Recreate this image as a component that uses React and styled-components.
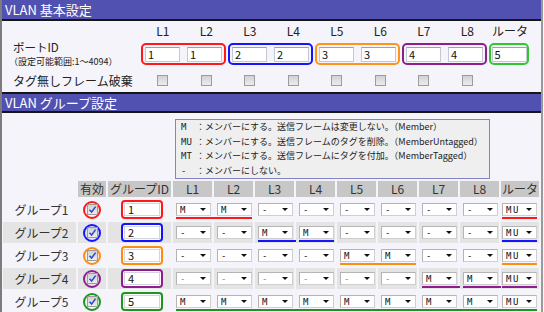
import React from "react";
import styled, { createGlobalStyle } from "styled-components";

const FONT = `"Noto Sans CJK JP", "Noto Sans", sans-serif`;

const Global = createGlobalStyle`
  html, body { margin: 0; padding: 0; background: #f4f4fa; }
  body { font-family: ${FONT}; color: #222; }
  * { box-sizing: border-box; }
`;

const Frame = styled.div`
  width: 543px;
  height: 312px;
  overflow: hidden;
  border-left: 2px solid #7c7c7c;
  border-right: 2px solid #9a9a9a;
  background: #f4f4fa;
`;

const SectionBar = styled.div`
  height: 21px;
  background: #5151b1;
  border-top: ${(p) => (p.$first ? 0 : 2)}px solid #161616;
  border-bottom: 2px solid #161616;
  color: #fff;
  font-size: 13px;
  line-height: ${(p) => (p.$first ? 19 : 17)}px;
  padding-left: 3px;
  white-space: nowrap;
`;

/* ---------- section 1 ---------- */
const BasicGrid = styled.div`
  display: grid;
  grid-template-columns: 139px repeat(8, 43.5px) 42px;
  grid-template-rows: 14px 30px 20px;
  row-gap: 1px;
  padding: 3px 0 2px;
  align-items: center;
`;

const ColLabel = styled.div`
  font-size: 12px;
  line-height: 14px;
  text-align: center;
  color: #222;
`;

const RowLabel = styled.div`
  grid-column: 1;
  padding-left: 11px;
  font-size: 12px;
  line-height: 15px;
  color: #222;
  white-space: nowrap;
`;

const PortTitle = styled.div`
  font-size: 11.5px;
  line-height: 16px;
`;

const SubNote = styled.div`
  font-size: 9px;
  line-height: 14px;
  margin-left: -4px;
`;

const PortBox = styled.div`
  grid-column: span ${(p) => p.$span};
  margin-right: 2px;
  height: 22px;
  border: 2px solid ${(p) => p.$color};
  border-radius: 5px;
  display: flex;
  align-items: center;
  justify-content: ${(p) => (p.$span === 1 ? "center" : "flex-start")};
  gap: 7px;
  padding: 0 ${(p) => (p.$span === 1 ? 0 : 2)}px;
`;

const TextInput = styled.div`
  width: ${(p) => p.$w}px;
  height: 15px;
  background: #fff;
  border: 1px solid #c2c8d4;
  border-top-color: #9aa2b0;
  font-size: 11px;
  line-height: 13px;
  padding-left: 2px;
  color: #111;
`;

const CheckCell = styled.div`
  display: flex;
  justify-content: center;
  align-items: center;
`;

const Box = styled.span`
  width: 11px;
  height: 11px;
  border: 1px solid #9c9c9c;
  background: linear-gradient(#d2d2d2, #ececec);
  display: inline-flex;
  align-items: center;
  justify-content: center;
`;

/* ---------- section 2 ---------- */
const Legend = styled.div`
  margin: 6px 0 0 173px;
  width: 315px;
  border: 1px solid #8484c4;
  background: #efeff0;
  padding: 0 5px;
  font-size: 9px;
  line-height: 14.5px;
  color: #222;
`;

const LegendLine = styled.div`
  display: flex;
  white-space: nowrap;
`;

const Code = styled.span`
  width: 15px;
  font-family: "DejaVu Sans Mono", monospace;
  font-size: 9px;
`;

const Table = styled.div`
  display: grid;
  grid-template-columns: 73px 28px 63px repeat(8, 39px) 38px;
  grid-template-rows: 16px repeat(5, 21px);
  column-gap: 2px;
  row-gap: 2px;
  margin: 2px 0 0 1px;
`;

const HeadCell = styled.div`
  background: ${(p) => (p.$blank ? "transparent" : "#c7c7c7")};
  font-size: 12px;
  line-height: 16px;
  text-align: center;
  color: #333;
  white-space: nowrap;
`;

const Cell = styled.div`
  background: ${(p) => (p.$alt ? "#e4e4e4" : "transparent")};
  display: flex;
  align-items: center;
  justify-content: ${(p) => p.$justify || "center"};
  padding-left: ${(p) => p.$pl || 0}px;
`;

const GroupName = styled(Cell)`
  font-size: 12px;
  color: #333;
  padding-left: 4px;
  white-space: nowrap;
`;

const Ring = styled.span`
  width: 18px;
  height: 18px;
  border: 2px solid ${(p) => p.$color};
  border-radius: 50%;
  display: flex;
  align-items: center;
  justify-content: center;
`;

const IdBox = styled.div`
  width: 42px;
  height: 19px;
  border: 2px solid ${(p) => p.$color};
  border-radius: 4px;
  background: #fff;
  padding: 1px;
`;

const IdInput = styled.div`
  height: 13px;
  border: 1px solid #d4d4dc;
  font-size: 11px;
  line-height: 11px;
  padding-left: 3px;
  color: #111;
`;

const SelectCell = styled.div`
  background: ${(p) => (p.$alt ? "#e4e4e4" : "transparent")};
  padding: 4px 0 0 ${(p) => p.$pl}px;
  display: flex;
  flex-direction: column;
  gap: 1px;
`;

const Select = styled.div`
  width: 35px;
  height: 13px;
  background: #fff;
  border: 1px solid #cfcfcf;
  border-top-color: #b4b4b4;
  border-left-color: #b4b4b4;
  display: flex;
  align-items: center;
  justify-content: space-between;
  padding: 0 4px 0 3px;
  font-family: "DejaVu Sans Mono", monospace;
  font-size: 9px;
  letter-spacing: ${(p) => (p.$wide ? 1.5 : 0)}px;
  color: ${(p) => (p.$dim ? "#888" : "#111")};
`;

const Arrow = styled.span`
  width: 0;
  height: 0;
  border-left: 3px solid transparent;
  border-right: 3px solid transparent;
  border-top: 3px solid #111;
`;

const Underline = styled.div`
  height: 2px;
  width: ${(p) => 35 + p.$extend}px;
  background: ${(p) => p.$color};
`;

const Check = () => (
  <svg width="9" height="9" viewBox="0 0 9 9">
    <path d="M1.5 4.8 L3.6 7 L7.6 1.6" fill="none" stroke="#2b48c8" strokeWidth="1.5" />
  </svg>
);

const portBoxes = [
  { color: "#ff1818", vals: ["1", "1"] },
  { color: "#1414ff", vals: ["2", "2"] },
  { color: "#ff9419", vals: ["3", "3"] },
  { color: "#8e1e8e", vals: ["4", "4"] },
  { color: "#2ec82e", vals: ["5"] },
];

const cols = ["L1", "L2", "L3", "L4", "L5", "L6", "L7", "L8"];

const groups = [
  { name: "グループ1", color: "#ff1818", id: "1", ports: ["M", "M", "-", "-", "-", "-", "-", "-"] },
  { name: "グループ2", color: "#1414ff", id: "2", ports: ["-", "-", "M", "M", "-", "-", "-", "-"] },
  { name: "グループ3", color: "#ff8c12", id: "3", ports: ["-", "-", "-", "-", "M", "M", "-", "-"] },
  { name: "グループ4", color: "#8e1e8e", id: "4", ports: ["-", "-", "-", "-", "-", "-", "M", "M"], dim: true },
  { name: "グループ5", color: "#1c961c", id: "5", ports: ["M", "M", "M", "M", "M", "M", "M", "M"] },
];

const legend = [
  ["M", "メンバーにする。送信フレームは変更しない。（Member）"],
  ["MU", "メンバーにする。送信フレームのタグを削除。（MemberUntagged）"],
  ["MT", "メンバーにする。送信フレームにタグを付加。（MemberTagged）"],
  ["-", "メンバーにしない。"],
];

export default function App() {
  return (
    <>
      <Global />
      <Frame>
        <SectionBar $first>VLAN 基本設定</SectionBar>
        <BasicGrid>
          <div />
          {cols.map((c) => (
            <ColLabel key={c}>{c}</ColLabel>
          ))}
          <ColLabel>ルータ</ColLabel>

          <RowLabel>
            <PortTitle>ポートID</PortTitle>
            <SubNote>（設定可能範囲:1～4094）</SubNote>
          </RowLabel>
          {portBoxes.map((b, i) => (
            <PortBox key={i} $color={b.color} $span={b.vals.length}>
              {b.vals.map((v, j) => (
                <TextInput key={j} $w={b.vals.length === 1 ? 35 : 36}>
                  {v}
                </TextInput>
              ))}
            </PortBox>
          ))}

          <RowLabel>タグ無しフレーム破棄</RowLabel>
          {cols.map((c) => (
            <CheckCell key={c}>
              <Box />
            </CheckCell>
          ))}
          <div />
        </BasicGrid>

        <SectionBar>VLAN グループ設定</SectionBar>
        <Legend>
          {legend.map(([c, t]) => (
            <LegendLine key={c}>
              <Code>{c}</Code>
              <span>：{t}</span>
            </LegendLine>
          ))}
        </Legend>

        <Table>
          <HeadCell $blank />
          <HeadCell>有効</HeadCell>
          <HeadCell>グループID</HeadCell>
          {cols.map((c) => (
            <HeadCell key={c}>{c}</HeadCell>
          ))}
          <HeadCell>ルータ</HeadCell>

          {groups.map((g, r) => {
            const alt = r % 2 === 1;
            const vals = [...g.ports, "MU"];
            return (
              <React.Fragment key={g.id}>
                <GroupName $alt={alt}>{g.name}</GroupName>
                <Cell $alt={alt}>
                  <Ring $color={g.color}>
                    <Box>
                      <Check />
                    </Box>
                  </Ring>
                </Cell>
                <Cell $alt={alt} $justify="flex-start" $pl={13}>
                  <IdBox $color={g.color}>
                    <IdInput>{g.id}</IdInput>
                  </IdBox>
                </Cell>
                {vals.map((v, i) => {
                  const member = v !== "-";
                  const join = member && i < 8 && vals[i + 1] !== "-";
                  const extend = join ? (i < 7 ? 6 : 4) : 0;
                  return (
                    <SelectCell key={i} $alt={alt} $pl={i === 8 ? 1 : 3}>
                      <Select $wide={v.length > 1} $dim={g.dim && !member}>
                        <span>{v}</span>
                        <Arrow />
                      </Select>
                      {member && <Underline $color={g.color} $extend={extend} />}
                    </SelectCell>
                  );
                })}
              </React.Fragment>
            );
          })}
        </Table>
      </Frame>
    </>
  );
}
